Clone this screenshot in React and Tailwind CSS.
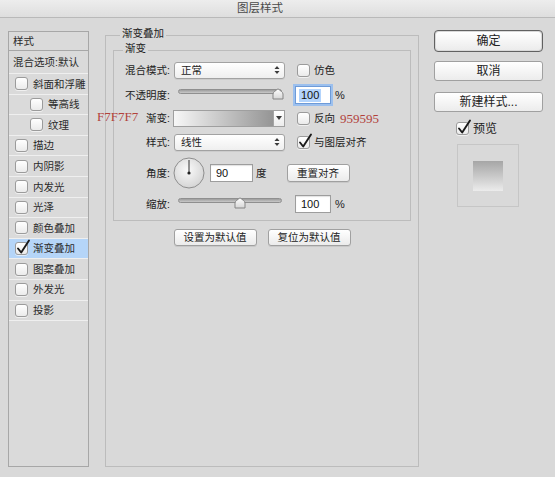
import React from "react";

const font = "font-['Liberation_Sans','Noto_Sans_CJK_SC',sans-serif]";

function CheckBox({ checked, className = "" }) {
  return (
    <span
      className={
        "relative block w-[13px] h-[13px] shrink-0 rounded-[3px] border border-[#9b9b9b] bg-linear-to-b from-white to-[#ebebeb] shadow-[0_1px_0_rgba(255,255,255,0.6)] " +
        className
      }
    >
      {checked && (
        <svg className="absolute -top-[4px] left-[0px]" width="15" height="16" viewBox="0 0 15 16">
          <path d="M2 9.5 L5.2 13.5 L13 1.5" fill="none" stroke="#1a1a1a" strokeWidth="1.9" strokeLinecap="round" strokeLinejoin="round" />
        </svg>
      )}
    </span>
  );
}

function StyleRow({ label, indent, checked, active }) {
  return (
    <div
      className={
        "h-[20.6px] shrink-0 border-b border-[#efefef] flex items-center gap-[5px] " +
        (indent ? "pl-[21px] " : "pl-[6px] ") +
        (active ? "bg-[#b5d5f8]" : "")
      }
    >
      <CheckBox checked={checked} />
      <span className="text-[10.5px] leading-none text-[#2a2a2a]">{label}</span>
    </div>
  );
}

function Arrows() {
  return (
    <svg width="6" height="10" viewBox="0 0 6 10">
      <path d="M0.5 4 L3 1 L5.5 4 Z" fill="#3a3a3a" />
      <path d="M0.5 6 L3 9 L5.5 6 Z" fill="#3a3a3a" />
    </svg>
  );
}

function Select({ value }) {
  return (
    <div className="ml-[4px] w-[111px] h-[17px] rounded-[3px] border border-[#a2a2a2] bg-linear-to-b from-white to-[#efefef] flex items-center justify-between pl-[6px] pr-[4px] shadow-[0_1px_0_rgba(0,0,0,0.06)]">
      <span className="text-[10.5px] leading-none text-[#222]">{value}</span>
      <Arrows />
    </div>
  );
}

function Slider({ at }) {
  return (
    <div className="ml-[4px] w-[111px] h-[18px] relative">
      <div className="ml-[4px] mt-[3px] w-[104px] h-[5px] rounded-full border border-[#8f8f8f] bg-linear-to-b from-[#9d9d9d] to-[#c9c9c9]" />
      <svg className="absolute top-[2px]" style={{ left: at }} width="12" height="12" viewBox="0 0 12 12">
        <defs>
          <linearGradient id={"th" + at} x1="0" y1="0" x2="0" y2="1">
            <stop offset="0" stopColor="#ffffff" />
            <stop offset="1" stopColor="#d6d6d6" />
          </linearGradient>
        </defs>
        <path d="M6 0.8 C8 2.5 11 4 11 6 L11 11 L1 11 L1 6 C1 4 4 2.5 6 0.8 Z" fill={"url(#th" + at + ")"} stroke="#858585" strokeWidth="1" />
      </svg>
    </div>
  );
}

function Input({ value, w, focused, ml }) {
  return (
    <div
      className={
        "h-[18px] bg-white flex items-center pl-[3px] " +
        (focused
          ? "border border-[#6e9bd8] shadow-[0_0_0_2px_#9cc0ee] "
          : "border border-[#9d9d9d] shadow-[inset_0_1px_1px_rgba(0,0,0,0.12)] ") +
        w +
        " " +
        ml
      }
    >
      <span className={"text-[11px] leading-[13px] px-[2px] text-[#111] " + (focused ? "bg-[#b3d4fc]" : "")}>{value}</span>
    </div>
  );
}

function SmallButton({ children, className }) {
  return (
    <div
      className={
        "h-[17px] rounded-[3px] border border-[#a0a0a0] bg-linear-to-b from-white to-[#ebebeb] flex items-center justify-center text-[10.5px] leading-none text-[#222] shadow-[0_1px_0_rgba(0,0,0,0.08)] " +
        className
      }
    >
      {children}
    </div>
  );
}

function Label({ children }) {
  return <span className="w-[56px] shrink-0 text-right text-[10.5px] leading-none text-[#222]">{children}</span>;
}

export default function App() {
  const rows = [
    { label: "斜面和浮雕" },
    { label: "等高线", indent: true },
    { label: "纹理", indent: true },
    { label: "描边" },
    { label: "内阴影" },
    { label: "内发光" },
    { label: "光泽" },
    { label: "颜色叠加" },
    { label: "渐变叠加", checked: true, active: true },
    { label: "图案叠加" },
    { label: "外发光" },
    { label: "投影" },
  ];

  return (
    <div className={"w-[555px] h-[477px] bg-[#d9d9d9] overflow-hidden relative " + font}>
      {/* title bar */}
      <div className="h-[18px] border-b border-[#b9b9b9] bg-linear-to-b from-[#ededed] to-[#dedede] flex items-center justify-center pr-[35px]">
        <span className="text-[11.5px] leading-none text-[#4a4a4a]">图层样式</span>
      </div>

      <div className="flex items-start">
        {/* styles list */}
        <div className="ml-[8px] mt-[13px] w-[81px] h-[436px] border border-[#a7a7a7] bg-[#dadada] flex flex-col">
          <div className="h-[19px] shrink-0 border-b border-[#a7a7a7] flex items-center pl-[4px] text-[10.5px] leading-none text-[#2a2a2a]">
            样式
          </div>
          <div className="h-[23px] shrink-0 border-b border-[#efefef] flex items-center pl-[4px] text-[10.5px] leading-none text-[#2a2a2a] whitespace-nowrap">
            混合选项:默认
          </div>
          {rows.map((r) => (
            <StyleRow key={r.label} {...r} />
          ))}
        </div>

        {/* gradient overlay group */}
        <div className="ml-[16px] mt-[17px] w-[314px] h-[432px] border border-[#bcbcbc] relative">
          <span className="absolute left-[14px] -top-[10px] px-[2px] bg-[#d9d9d9] text-[10.5px] leading-[14px] text-[#222]">渐变叠加</span>

          <div className="ml-[7px] mt-[14px] w-[298px] h-[171px] border border-[#bcbcbc] relative pt-[10px]">
            <span className="absolute left-[9px] -top-[10px] px-[2px] bg-[#d9d9d9] text-[10.5px] leading-[14px] text-[#222]">渐变</span>

            <div className="h-[18px] flex items-center">
              <Label>混合模式:</Label>
              <Select value="正常" />
              <CheckBox className="ml-[12px]" />
              <span className="ml-[4px] text-[10.5px] leading-none text-[#222]">仿色</span>
            </div>

            <div className="mt-[7px] h-[18px] flex items-center">
              <Label>不透明度:</Label>
              <Slider at={98} />
              <Input value="100" w="w-[36px]" ml="ml-[10px]" focused />
              <span className="ml-[4px] text-[11px] leading-none text-[#222]">%</span>
            </div>

            <div className="mt-[5px] h-[18px] flex items-center">
              <Label>渐变:</Label>
              <div className="ml-[3px] w-[112px] h-[17px] flex border border-[#9f9f9f]">
                <div className="w-[99px] h-full bg-linear-to-r from-[#f7f7f7] to-[#959595]" />
                <div className="flex-1 h-full border-l border-[#a5a5a5] bg-linear-to-b from-white to-[#ececec] flex items-center justify-center">
                  <svg width="6" height="4" viewBox="0 0 6 4">
                    <path d="M0 0 L6 0 L3 4 Z" fill="#3a3a3a" />
                  </svg>
                </div>
              </div>
              <CheckBox className="ml-[12px]" />
              <span className="ml-[4px] text-[10.5px] leading-none text-[#222]">反向</span>
              <span className="ml-[5px] text-[13px] leading-none text-[#b2413b] font-['Liberation_Serif',serif]">959595</span>
            </div>

            <div className="mt-[6px] h-[18px] flex items-center">
              <Label>样式:</Label>
              <Select value="线性" />
              <CheckBox className="ml-[12px]" checked />
              <span className="ml-[4px] text-[10.5px] leading-none text-[#222]">与图层对齐</span>
            </div>

            <div className="mt-[6px] h-[32px] flex items-center">
              <Label>角度:</Label>
              <svg className="ml-[3px] shrink-0" width="32" height="32" viewBox="0 0 32 32">
                <defs>
                  <radialGradient id="dial" cx="0.45" cy="0.4" r="0.65">
                    <stop offset="0" stopColor="#fafafa" />
                    <stop offset="1" stopColor="#d2d2d2" />
                  </radialGradient>
                </defs>
                <circle cx="16" cy="16" r="15" fill="url(#dial)" stroke="#8e8e8e" strokeWidth="1" />
                <line x1="16" y1="16" x2="16" y2="3" stroke="#333" strokeWidth="1" />
                <circle cx="16" cy="16" r="1.6" fill="#222" />
              </svg>
              <Input value="90" w="w-[43px]" ml="ml-[5px]" />
              <span className="ml-[3px] text-[10.5px] leading-none text-[#222]">度</span>
              <SmallButton className="ml-[20px] w-[63px] h-[18px]">重置对齐</SmallButton>
            </div>

            <div className="mt-[6px] h-[18px] flex items-center">
              <Label>缩放:</Label>
              <Slider at={60} />
              <Input value="100" w="w-[36px]" ml="ml-[10px]" />
              <span className="ml-[4px] text-[11px] leading-none text-[#222]">%</span>
            </div>
          </div>

          <div className="mt-[8px] flex justify-center gap-[11px]">
            <SmallButton className="w-[83px]">设置为默认值</SmallButton>
            <SmallButton className="w-[83px]">复位为默认值</SmallButton>
          </div>
        </div>

        {/* right column */}
        <div className="ml-[15px] mt-[12px] w-[109px] flex flex-col">
          <div className="h-[22px] rounded-[4px] border border-[#616161] p-px">
            <div className="h-full rounded-[3px] bg-linear-to-b from-white to-[#ececec] flex items-center justify-center text-[12px] leading-none text-[#222]">
              确定
            </div>
          </div>
          <div className="mt-[9px] h-[20px] rounded-[3px] border border-[#a0a0a0] bg-linear-to-b from-white to-[#ececec] flex items-center justify-center text-[12px] leading-none text-[#222]">
            取消
          </div>
          <div className="mt-[11px] h-[20px] rounded-[3px] border border-[#a0a0a0] bg-linear-to-b from-white to-[#ececec] flex items-center justify-center text-[12px] leading-none text-[#222]">
            新建样式...
          </div>
          <div className="mt-[10px] ml-[22px] flex items-center">
            <CheckBox checked />
            <span className="ml-[4px] text-[12px] leading-none text-[#222]">预览</span>
          </div>
          <div className="mt-[9px] ml-[23px] w-[62px] h-[63px] border border-[#c6c6c6] flex items-center justify-center">
            <div className="w-[30px] h-[30px] bg-linear-to-b from-[#a6a6a6] to-[#ececec]" />
          </div>
        </div>
      </div>

      {/* colour annotation */}
      <span className="absolute left-[97px] top-[110px] text-[13px] leading-none text-[#b2413b] font-['Liberation_Serif',serif]">F7F7F7</span>
    </div>
  );
}
